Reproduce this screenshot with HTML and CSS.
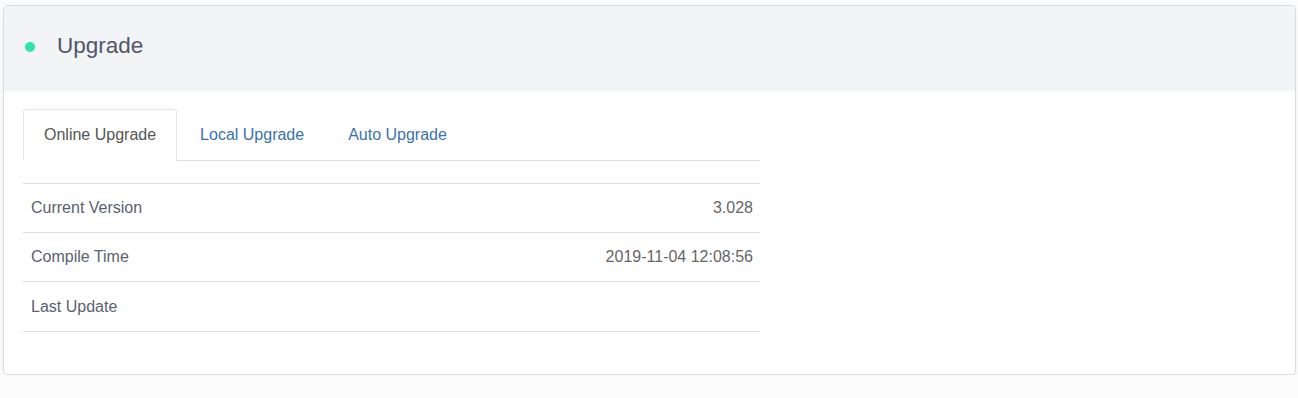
FILE: index.html
```html
<!DOCTYPE html>
<html lang="en">
<head>
    <meta charset="UTF-8">
    <meta name="viewport" content="width=device-width, initial-scale=1.0">
    <title>Upgrade</title>
    <link rel="stylesheet" href="styles.css">
</head>
<body>
    <div class="panel">
        <div class="panel-heading">
            <span class="status-dot"></span>
            <h2>Upgrade</h2>
        </div>
        <div class="panel-body">
            <div class="tab-wrap">
                <ul class="nav-tabs">
                    <li class="active"><a href="#">Online Upgrade</a></li>
                    <li><a href="#">Local Upgrade</a></li>
                    <li><a href="#">Auto Upgrade</a></li>
                </ul>
                <table class="info-table">
                    <tr>
                        <td>Current Version</td>
                        <td class="value">3.028</td>
                    </tr>
                    <tr>
                        <td>Compile Time</td>
                        <td class="value">2019-11-04 12:08:56</td>
                    </tr>
                    <tr>
                        <td>Last Update</td>
                        <td class="value"></td>
                    </tr>
                </table>
            </div>
        </div>
    </div>
</body>
</html>
```

FILE: styles.css
```css
* {
    margin: 0;
    padding: 0;
    box-sizing: border-box;
    font-family: 'Liberation Sans', Arial, sans-serif;
}

body {
    background: #fcfcfc;
    padding: 5px 2px 0 3px;
}

.panel {
    background: #fff;
    border: 1px solid #dcdcdf;
    border-radius: 4px;
    box-shadow: 0 6px 16px rgba(0, 0, 0, 0.04);
    overflow: hidden;
}

.panel-heading {
    display: flex;
    align-items: center;
    height: 85px;
    padding: 0 21px;
    background: #f3f4f6;
}

.status-dot {
    width: 10px;
    height: 10px;
    border-radius: 50%;
    background: #30e3a6;
    margin-right: 22px;
    margin-top: -3px;
}

.panel-heading h2 {
    font-size: 22.5px;
    font-weight: normal;
    color: #515669;
    margin-top: -5px;
}

.panel-body {
    padding: 18px 19px 42px;
}

.tab-wrap {
    width: 737px;
}

.nav-tabs {
    display: flex;
    list-style: none;
    border-bottom: 1px solid #dddddf;
}

.nav-tabs li {
    margin-right: 2px;
    margin-bottom: -1px;
}

.nav-tabs a {
    display: block;
    padding: 14px 20px 14px;
    font-size: 16px;
    line-height: 22px;
    color: #3a72ad;
    text-decoration: none;
    border: 1px solid transparent;
    border-radius: 4px 4px 0 0;
}

.nav-tabs li.active a {
    color: #555;
    background: #fff;
    border-color: #e6e6e8;
    border-bottom-color: #fff;
    box-shadow: 0 -2px 6px rgba(0, 0, 0, 0.03);
}

.info-table {
    width: 100%;
    margin-top: 22px;
    border-collapse: collapse;
}

.info-table td {
    height: 49px;
    padding: 0 7px 0 8px;
    border-top: 1px solid #dddddf;
    font-size: 16px;
    color: #5b5f6f;
}

.info-table tr:last-child td {
    height: 50px;
    border-bottom: 1px solid #dddddf;
}

.info-table td.value {
    text-align: right;
    color: #666;
}
```
